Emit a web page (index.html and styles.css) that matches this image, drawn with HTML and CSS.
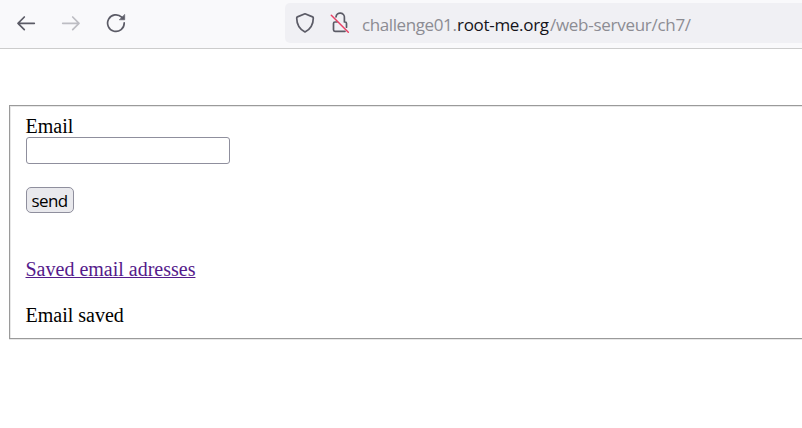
FILE: index.html
```html
<!DOCTYPE html>
<html lang="en">
<head>
<meta charset="utf-8">
<title>Email</title>
<link rel="stylesheet" href="styles.css">
</head>
<body>
<header class="toolbar">
  <nav class="nav">
    <svg class="icon" width="20" height="20" viewBox="0 0 20 20"><path d="M18.3 10.3H2M8.3 4 2 10.3l6.3 6.3"/></svg>
    <svg class="icon disabled" width="20" height="20" viewBox="0 0 20 20"><path d="M1.700 10.300H18M11.700 4 18 10.300l-6.300 6.300"/></svg>
    <svg class="icon" width="20" height="20" viewBox="0 0 20 20"><path d="M18.200 9.900a8.300 8.300 0 1 1-2.500-5.700"/><path class="fill" d="M18.700 1.700v5.100h-5.100z"/></svg>
  </nav>
  <div class="urlbar">
    <svg class="icon shield" width="20" height="22" viewBox="0 0 20 22"><path d="M10 1.800 17.600 4.900c.5.2.7.5.7 1 0 6-2.500 11-8.300 14.100C4.200 16.900 1.700 11.900 1.700 5.900c0-.5.2-.8.7-1z"/></svg>
    <svg class="icon lock" width="20" height="22" viewBox="0 0 20 22"><path d="M6 4.800a4.200 4.200 0 0 1 8.400 1V10h.6q1.500 0 1.500 1.500v3.700M7 10H5q-1.500 0-1.500 1.500v6.300q0 1.500 1.500 1.500h10"/><path class="slash" d="m1.300 3.300 17 17"/></svg>
    <div class="url"><span class="sub">challenge01.</span><span class="domain">root-me.org</span><span class="path">/web-serveur/ch7/</span></div>
  </div>
</header>
<main>
  <form class="panel">
    <label for="email">Email</label>
    <input id="email" type="text">
    <button type="button">send</button>
    <a href="#">Saved email adresses</a>
    <p>Email saved</p>
  </form>
</main>
</body>
</html>
```
FILE: styles.css
```css
* { box-sizing: border-box; }
body {
  margin: 0;
  height: 428px;
  overflow: hidden;
  background: #fff;
  color: #000;
  font: 20px/23px "Liberation Serif", serif;
}
.toolbar {
  display: flex;
  height: 49px;
  padding: 3px 0 5px 16px;
  background: #f9f9fb;
  border-bottom: 1px solid #ccc;
}
.nav { display: flex; gap: 25px; width: 269px; padding-top: 10px; }
.icon { flex: none; fill: none; stroke: #5b5b66; stroke-width: 1.7; stroke-linecap: round; stroke-linejoin: round; }
.disabled { stroke: #bdbdc3; }
.icon .fill { fill: #5b5b66; stroke-width: .6; }
.urlbar {
  display: flex;
  flex: 1;
  height: 40px;
  padding: 9px 0 0 10px;
  background: #f0f0f4;
  border-radius: 5px 0 0 5px;
}
.lock { margin-left: 15px; }
.icon .slash { stroke: #e94065; stroke-width: 1.5; }
.url {
  display: flex;
  margin: 1px 0 0 12px;
  color: #8c8c93;
  font: 17px/24px "Open Sans", sans-serif;
  white-space: nowrap;
}
.sub { width: 95px; letter-spacing: -.4px; }
.domain { width: 93px; color: #15141a; letter-spacing: -.3px; }
.path { letter-spacing: -.28px; }
main { padding: 56px 0 0 9px; }
.panel {
  display: flex;
  flex-direction: column;
  align-items: flex-start;
  height: 234px;
  padding: 9px 0 0 15.5px;
  border: 1px solid #9a9a9a;
  border-right: 0;
  box-shadow: inset 1px 1px #e8e8e8, 0 1px #e8e8e8;
}
input {
  width: 204px;
  height: 27px;
  margin: -1px 0 23px;
  border: 1px solid #8f8f9d;
  border-radius: 3px;
}
button {
  width: 48px;
  height: 26px;
  margin-bottom: 45px;
  padding: 1px 0 0;
  border: 1px solid #8f8f9d;
  border-radius: 5px;
  background: #e9e9ed;
  color: #000;
  font: 17px/22px "Open Sans", sans-serif;
  letter-spacing: -.6px;
}
a { color: #551a8b; text-decoration-thickness: 1px; text-underline-offset: 1px; }
p { margin: 23px 0 0; }
```
